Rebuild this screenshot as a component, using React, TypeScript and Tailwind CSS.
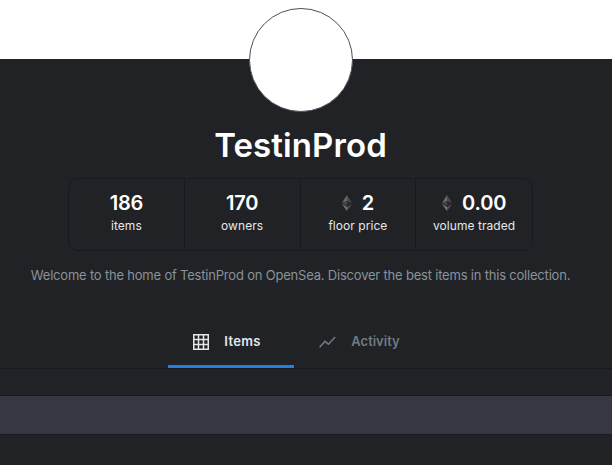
export default function App() {
  const font = "font-['Inter','Liberation_Sans',sans-serif]";
  const Eth = () => (
    <svg width="10" height="16" viewBox="0 0 10 16" className="mr-[10px]">
      <polygon points="5,0 0,8.1 5,6" fill="#6a6a6a" />
      <polygon points="5,0 10,8.1 5,6" fill="#4a4a4a" />
      <polygon points="5,6 0,8.1 5,11" fill="#454545" />
      <polygon points="5,6 10,8.1 5,11" fill="#2a2a2a" />
      <polygon points="0,9.1 5,16 5,12" fill="#777777" />
      <polygon points="10,9.1 5,16 5,12" fill="#505050" />
    </svg>
  );
  const Stat = ({ value, label, eth, last }: { value: string; label: string; eth?: boolean; last?: boolean }) => (
    <div className={`w-[116px] flex flex-col items-center pt-[10px] ${last ? "" : "border-r border-[#151b22]"}`}>
      <div className="flex items-center h-[28px] text-[20px] font-semibold text-white leading-none tracking-[-0.2px]">
        {eth && <Eth />}
        {value}
      </div>
      <div className="text-[12px] leading-[18px] text-[#e5e8eb] tracking-[0.05px]">{label}</div>
    </div>
  );
  return (
    <div className={`w-[612px] h-[465px] overflow-hidden bg-white flex flex-col ${font}`}>
      <div className="h-[59px] shrink-0 bg-white" />
      <div className="flex-1 bg-[#202225] flex flex-col items-center pr-[11px]">
        <div className="w-[104px] h-[104px] shrink-0 -mt-[51px] rounded-full bg-white border border-[#4c505c]" />
        <h1 className="mt-[13px] text-[33px] leading-[40px] font-semibold text-white tracking-[0.1px]">TestinProd</h1>
        <div className="mt-[13px] w-[465px] h-[73px] flex rounded-[10px] border border-[#151b22]">
          <Stat value="186" label="items" />
          <Stat value="170" label="owners" />
          <Stat value="2" label="floor price" eth />
          <Stat value="0.00" label="volume traded" eth last />
        </div>
        <p className="mt-[14px] text-[13px] leading-[20px] text-[#8a939b] tracking-[-0.2px] whitespace-nowrap">
          Welcome to the home of TestinProd on OpenSea. Discover the best items in this collection.
        </p>
        <div className="mt-[34px] w-[612px] h-[50px] shrink-0 -mr-[11px] flex justify-center border-b border-[#151b22]">
          <div className="w-[126px] h-[49px] flex items-center justify-center gap-[15px] pr-[8px] border-b-[3px] border-[#2081e2] -ml-[24px]">
            <svg width="16" height="16" viewBox="0 0 16 16" fill="none" stroke="#e5e8eb" strokeWidth="1.5">
              <rect x="0.75" y="0.75" width="14.5" height="14.5" />
              <path d="M5.5 0.75V15.25M10.5 0.75V15.25M0.75 5.5H15.25M0.75 10.5H15.25" />
            </svg>
            <span className="text-[13px] font-semibold text-[#e5e8eb] tracking-[0.3px]">Items</span>
          </div>
          <div className="w-[126px] h-[49px] flex items-center justify-center gap-[15px] pl-[5px] pb-[3px] text-[#707a83]">
            <svg width="17" height="12" viewBox="0 0 17 12" fill="none" stroke="#707a83" strokeWidth="1.5">
              <path d="M0.6 11.2 L6 5.4 L9.4 8.2 L16.2 1" />
            </svg>
            <span className="text-[13px] font-semibold">Activity</span>
          </div>
        </div>
        <div className="mt-[26px] w-[612px] h-[40px] shrink-0 -mr-[11px] bg-[#353840] border-y border-[#151b22]" />
      </div>
    </div>
  );
}
